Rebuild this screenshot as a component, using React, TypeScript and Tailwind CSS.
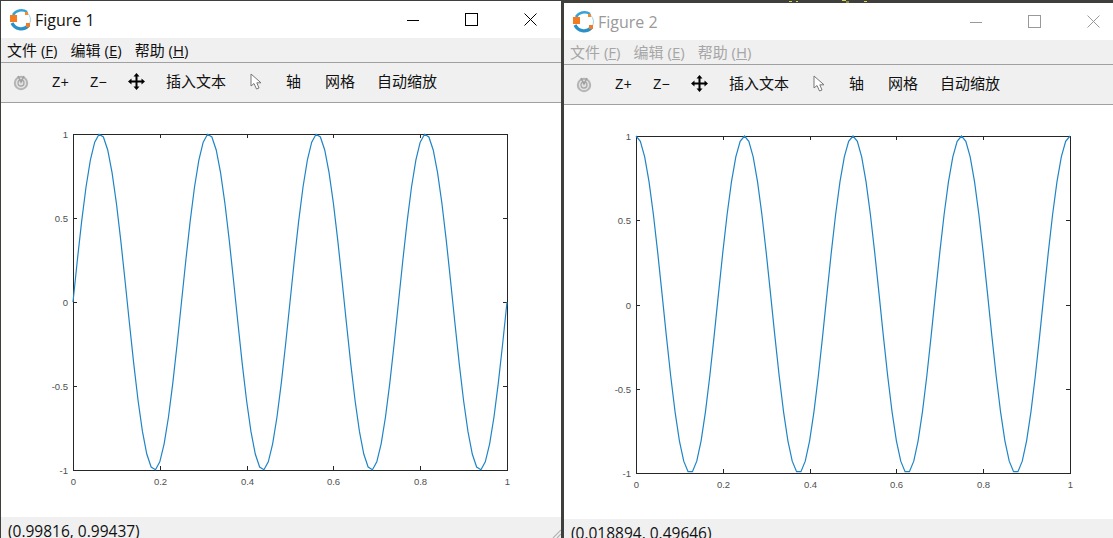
import React from 'react';

const UI_FONT = { fontFamily: '"Open Sans", "Noto Sans CJK SC", sans-serif' };
const ZOOM_FONT = { fontFamily: '"Liberation Mono", monospace' };

function OctaveLogo() {
  return (
    <svg width="24" height="24" viewBox="0 0 24 24" className="shrink-0">
      <path d="M3 7 A10 10 0 0 1 17 4" fill="none" stroke="#35a3d6" strokeWidth="2.6" />
      <path d="M2 15 A10 10 0 0 0 18 18" fill="none" stroke="#2a90c8" strokeWidth="3.2" />
      <path d="M17.5 5 A10 10 0 0 1 19.5 16" fill="none" stroke="#9fd3ea" strokeWidth="1" />
      <rect x="0" y="7" width="7" height="7" fill="#f47b20" />
      <rect x="15" y="4" width="3" height="3" fill="#f58a2e" />
      <rect x="16" y="15" width="4" height="4" fill="#f47b20" />
    </svg>
  );
}

function WindowButtons({ color }: { color: string }) {
  return (
    <div className="flex items-center gap-[46px]">
      <svg width="12" height="12" viewBox="0 0 12 12">
        <path d="M0 6.5H12" stroke={color} strokeWidth="1" />
      </svg>
      <svg width="13" height="13" viewBox="0 0 13 13">
        <rect x="0.5" y="0.5" width="12" height="12" fill="none" stroke={color} />
      </svg>
      <svg width="13" height="13" viewBox="0 0 13 13">
        <path d="M0.5 0.5L12.5 12.5M12.5 0.5L0.5 12.5" stroke={color} strokeWidth="1" />
      </svg>
    </div>
  );
}

function RotateIcon() {
  return (
    <svg width="16" height="18" viewBox="0 0 16 18" className="shrink-0">
      <circle cx="8" cy="10" r="6.2" fill="#e2e2e2" stroke="#b4b4b4" strokeWidth="2" />
      <circle cx="8" cy="10" r="3" fill="none" stroke="#a8a8a8" strokeWidth="1.3" />
      <path d="M5 3L8 9L11 3" fill="none" stroke="#a0a0a0" strokeWidth="1.5" />
    </svg>
  );
}

function MoveIcon() {
  return (
    <svg width="17" height="17" viewBox="0 0 17 17" className="shrink-0">
      <path d="M8.5 2V15M2 8.5H15" stroke="#000" strokeWidth="2" />
      <path d="M8.5 0L11.5 3.5H5.5ZM8.5 17L5.5 13.5H11.5ZM0 8.5L3.5 5.5V11.5ZM17 8.5L13.5 11.5V5.5Z" fill="#000" />
    </svg>
  );
}

function CursorIcon() {
  return (
    <svg width="12" height="17" viewBox="0 0 12 17" className="shrink-0">
      <path d="M1 1V13L4 10.5L6.5 16L9 15L6.8 9.8H11Z" fill="#fff" stroke="#777" strokeWidth="1" />
    </svg>
  );
}

function Toolbar() {
  return (
    <div className="h-[39px] bg-[#f0f0f0] flex items-center pl-[12px] pb-[2px] text-[15px] text-[#111]">
      <RotateIcon />
      <span className="ml-[23px] w-[17px] pt-[3px] text-[14px]" style={ZOOM_FONT}>Z+</span>
      <span className="ml-[21px] w-[17px] pt-[3px] text-[14px]" style={ZOOM_FONT}>Z−</span>
      <span className="ml-[21px] flex"><MoveIcon /></span>
      <span className="ml-[21px]">插入文本</span>
      <span className="ml-[24px] flex"><CursorIcon /></span>
      <span className="ml-[24px]">轴</span>
      <span className="ml-[24px]">网格</span>
      <span className="ml-[22px]">自动缩放</span>
    </div>
  );
}

function Menu({ dim }: { dim: boolean }) {
  const entries: [string, string][] = [['文件', 'F'], ['编辑', 'E'], ['帮助', 'H']];
  return (
    <div className={`h-[24px] bg-[#f0f0f0] flex items-center gap-[13px] pl-[6px] text-[15px] ${dim ? 'text-[#a6a6a6]' : 'text-[#111]'}`}>
      {entries.map(([label, key]) => (
        <span key={key} className="whitespace-pre">
          {label} (<span className="underline">{key}</span>)
        </span>
      ))}
    </div>
  );
}

function Plot({ fn, left, top, height }: { fn: (x: number) => number; left: number; top: number; height: number }) {
  const w = 434;
  const points: string[] = [];
  for (let i = 0; i <= 100; i++) {
    const x = i / 100;
    points.push(`${left + x * w},${top + ((1 - fn(x)) / 2) * height}`);
  }
  const xTicks = [0, 0.2, 0.4, 0.6, 0.8, 1];
  const yTicks = [1, 0.5, 0, -0.5, -1];
  return (
    <svg width="100%" height="100%" className="block bg-white" style={{ fontFamily: '"Liberation Sans", sans-serif' }}>
      <rect x={left + 0.5} y={top + 0.5} width={w} height={height} fill="none" stroke="#262626" />
      {xTicks.map((t) => {
        const px = Math.round(left + t * w) + 0.5;
        return (
          <g key={t}>
            <path d={`M${px} ${top}v4M${px} ${top + height}v-4`} stroke="#262626" />
            <text x={px} y={top + height + 15} fontSize="9.5" fill="#505050" textAnchor="middle">{t}</text>
          </g>
        );
      })}
      {yTicks.map((t) => {
        const py = Math.round(top + ((1 - t) / 2) * height) + 0.5;
        return (
          <g key={t}>
            <path d={`M${left} ${py}h4M${left + w} ${py}h-4`} stroke="#262626" />
            <text x={left - 5} y={py + 3} fontSize="9.5" fill="#505050" textAnchor="end">{t}</text>
          </g>
        );
      })}
      <polyline points={points.join(' ')} fill="none" stroke="#1f84c6" strokeWidth="1.2" />
    </svg>
  );
}

function FigureWindow({
  title,
  dim,
  status,
  fn,
  statusClass,
  controlsClass,
  grip,
}: {
  title: string;
  dim: boolean;
  status: string;
  fn: (x: number) => number;
  statusClass: string;
  controlsClass: string;
  grip?: boolean;
}) {
  return (
    <div className="flex flex-col h-full min-w-0 relative" style={UI_FONT}>
      <div className={`h-[37px] shrink-0 bg-white flex items-center pl-[9px] ${controlsClass}`}>
        <OctaveLogo />
        <span className={`ml-[1px] text-[16px] flex-1 ${dim ? 'text-[#999]' : 'text-[#111]'}`}>{title}</span>
        <WindowButtons color={dim ? '#999' : '#000'} />
      </div>
      <Menu dim={dim} />
      <div className="h-px bg-[#a0a0a0] shrink-0" />
      <Toolbar />
      <div className="h-px bg-[#a0a0a0] shrink-0" />
      <div className="flex-1 min-h-0">
        <Plot fn={fn} left={72} top={31} height={dim ? 337 : 336} />
      </div>
      <div className={`shrink-0 bg-[#f0f0f0] overflow-hidden pl-[7px] text-[15.5px] leading-[20px] text-[#111] ${statusClass}`}>
        {status}
      </div>
      {grip && (
        <svg width="10" height="10" viewBox="0 0 10 10" className="absolute right-0 bottom-0">
          <path d="M2 10L10 2M6 10L10 6" stroke="#b5b5b5" strokeWidth="1.2" />
        </svg>
      )}
    </div>
  );
}

export default function App() {
  return (
    <div className="w-[1113px] h-[538px] overflow-hidden bg-[#3f3f3d] flex relative">
      <div className="w-[561px] h-full pt-px pl-px shrink-0">
        <FigureWindow
          title="Figure 1"
          dim={false}
          status="(0.99816, 0.99437)"
          statusClass="h-[21px] pt-[4px]"
          controlsClass="pr-[24px]"
          fn={(x) => Math.sin(2 * Math.PI * 4 * x)}
          grip
        />
      </div>
      <div className="w-[552px] h-full pl-[3px] pt-[3px] shrink-0">
        <FigureWindow
          title="Figure 2"
          dim
          status="(0.018894, 0.49646)"
          statusClass="h-[19px] pt-[4px]"
          controlsClass="pr-[13px]"
          fn={(x) => Math.cos(2 * Math.PI * 4 * x)}
        />
      </div>
      {/* desktop peeking out above the second window */}
      <svg width="120" height="3" className="absolute left-[780px] top-0">
        <path d="M9 1.5h3M16 1.5h2M62 0.5h4M66 2h3M84 1.5h3" stroke="#d8d84a" strokeWidth="1" />
      </svg>
    </div>
  );
}
